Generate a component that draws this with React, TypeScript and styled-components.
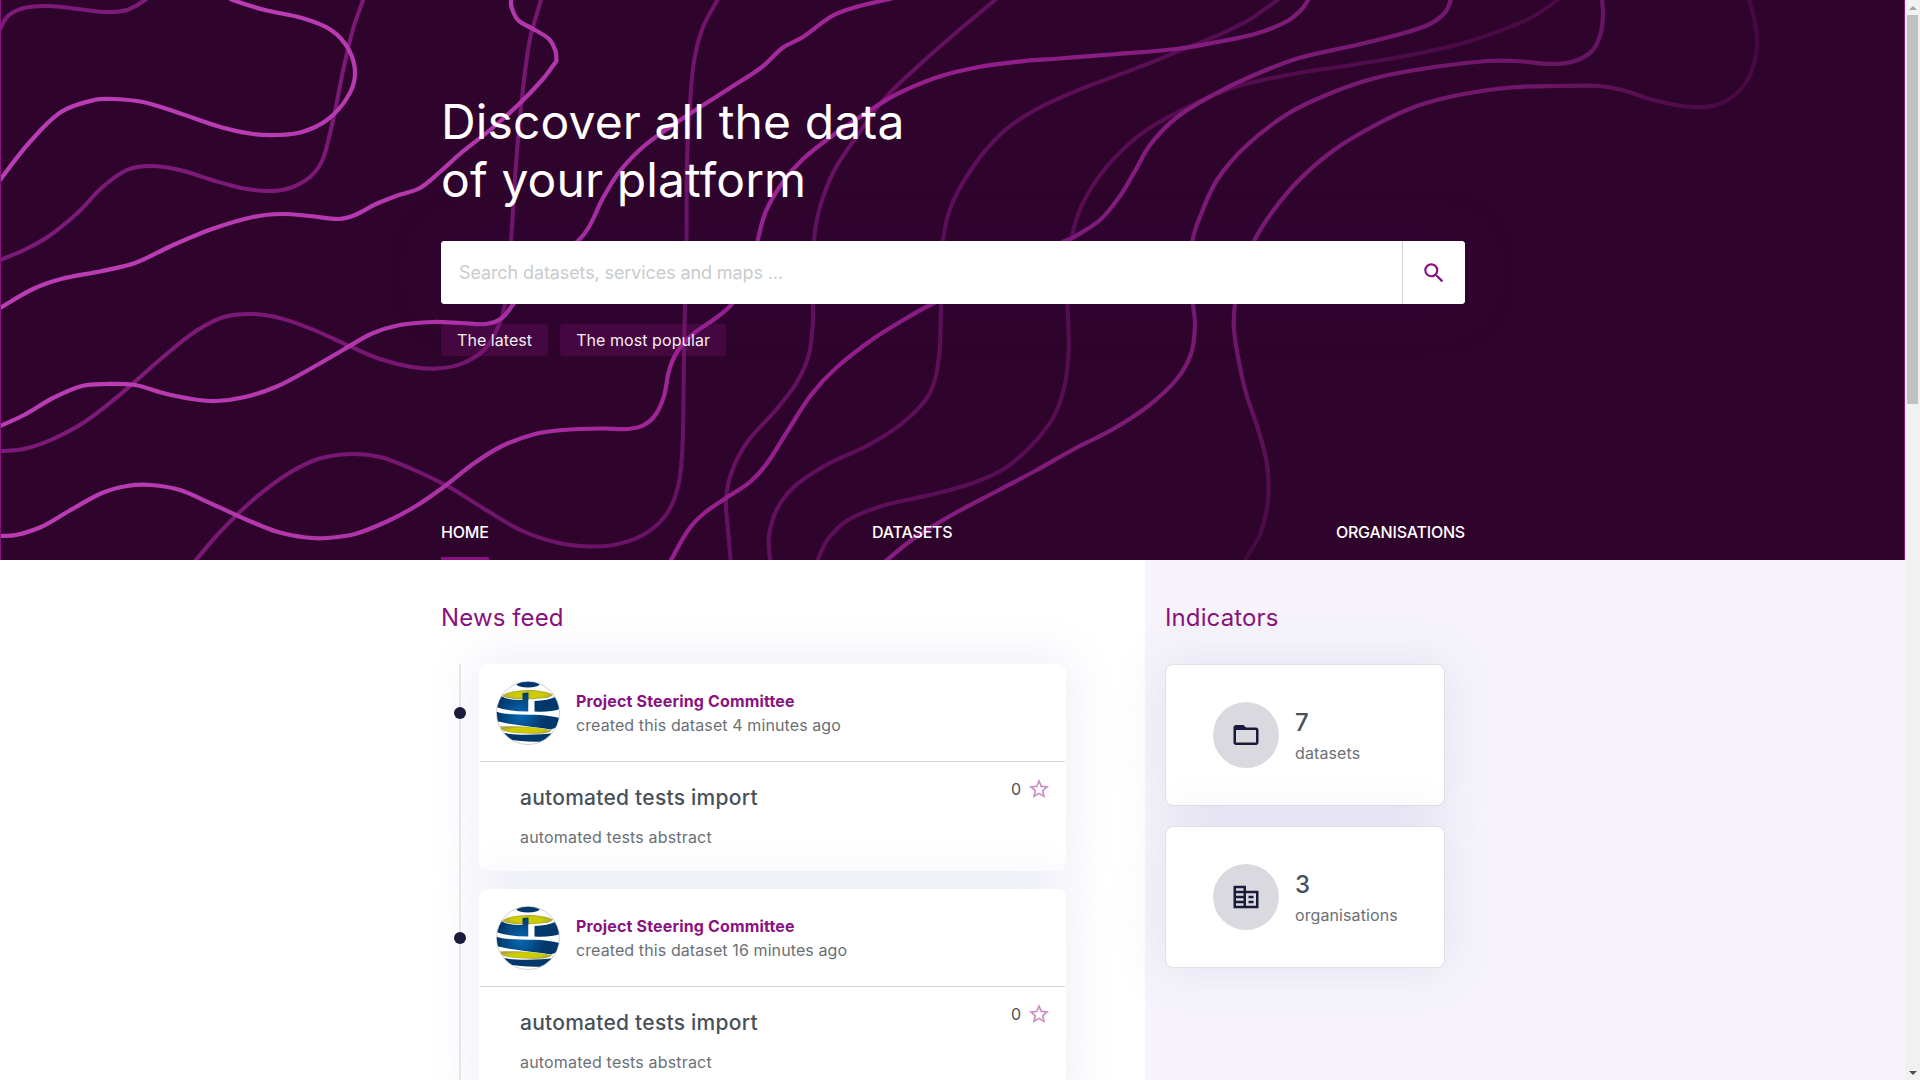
import React from "react";
import styled, { createGlobalStyle } from "styled-components";

const GlobalStyle = createGlobalStyle`
  *, *::before, *::after { box-sizing: border-box; }
  html, body { margin: 0; height: 100%; overflow: hidden; }
  body {
    font-family: Inter, "Liberation Sans", sans-serif;
    font-size: 16px;
    color: #47515b;
    background: #fff;
  }
  h1, h2, h3, p { margin: 0; font-weight: inherit; }
`;

type Point = [number, number];

const brightLines: Point[][] = [
  [[-6, 189], [0, 180], [29, 143], [61, 112], [94, 100], [114, 99], [143, 102], [176, 112], [224, 128], [253, 134], [278, 135], [302, 132], [327, 120], [347, 98], [355, 75], [349, 50], [331, 30], [302, 18], [265, 10], [233, 0], [222, -6]],
  [[-6, 312], [0, 308], [33, 289], [61, 279], [102, 271], [135, 263], [171, 246], [212, 229], [253, 217], [282, 214], [310, 216], [339, 219], [355, 215], [376, 204], [396, 196], [420, 188], [441, 171], [461, 153], [490, 130], [518, 105], [543, 79], [556.5, 61], [556.5, 61], [555.5, 51], [549, 39], [535, 30], [518, 20], [511.5, 7], [511, 0], [511, -6]],
  [[-6, 428], [0, 426], [24, 415], [53, 398], [82, 386], [106, 384], [135, 385], [163, 393], [192, 399], [216, 401], [245, 397], [278, 386], [310, 369], [343, 350], [371, 334], [400, 325], [433, 322], [461, 323], [486, 324], [502, 318], [513.5, 304], [545, 270], [578, 241], [589, 227], [603, 198], [620, 171], [644, 146], [673, 125], [697, 109], [730, 88], [762, 67], [783, 47.5], [803, 37], [832, 16], [856, 7], [885, 0], [905, -5]],
  [[-6, 536], [0, 536], [16, 535], [41, 527], [69, 511], [102, 493], [127, 486], [151, 485], [180, 490], [212, 504], [245, 519], [278, 532], [306, 537.5], [327, 538], [355, 534], [388, 521], [416, 506], [445, 486], [473, 464], [502, 446], [535, 434], [563, 430], [604, 428.5], [628, 429], [644, 425], [656, 414], [664, 396], [669, 371], [677, 352], [693, 334], [713, 320], [732, 304], [750, 272], [757.5, 241], [766, 211], [783, 182], [803, 159], [832, 136], [869, 111], [897, 94], [938, 77], [979, 67], [1024, 61], [1059, 58.5], [1117, 54], [1176, 49], [1223, 41], [1258, 33], [1287.5, 21], [1302, 9], [1308, 0], [1310, -6]],
  [[669, 564], [671, 560], [689, 529], [705, 512.5], [726, 498], [750, 482], [766.5, 464], [787, 432], [811, 395], [836, 368], [873, 339], [905, 319], [932, 304], [1000, 272], [1065, 241], [1073, 237.5], [1100, 220], [1120, 196], [1135, 171], [1150, 145], [1176, 118], [1211, 96], [1252, 76], [1299, 58], [1352, 46], [1393, 36], [1428, 25], [1445, 12.5], [1450.6, 0], [1451, -6]],
  [[883, 564], [887, 560], [913, 539], [950, 516], [999, 490], [1035, 471], [1076, 448], [1111.5, 430], [1147, 407], [1176, 380], [1191, 354], [1195, 325], [1193, 304], [1191, 272], [1192.5, 241], [1199.5, 218], [1217, 180], [1246, 146], [1287.5, 114], [1328.6, 94], [1375.5, 78], [1434, 67], [1487, 61], [1516, 61], [1551.6, 64], [1575, 61], [1593, 50], [1601, 32], [1603, 14], [1602, 0], [1601, -6]],
  [[1243, 564], [1245, 560], [1261, 532], [1268, 500], [1267, 464], [1258, 429], [1246, 393], [1238, 357], [1234, 329], [1235, 304], [1242, 272], [1254, 241], [1273, 211], [1299, 180], [1334, 150], [1375.5, 125], [1417, 106], [1463.5, 94], [1510.5, 87.5], [1557, 86], [1598.5, 86], [1622, 90], [1657, 101], [1692, 107], [1716, 105], [1736, 94], [1750, 75], [1757, 46], [1754.6, 21], [1749, 0], [1747, -6]],
];

const dimLines: Point[][] = [
  [[-2, 34], [0, 29], [8, 16], [24, 8], [49, 6], [78, 9], [106, 12], [127, 10], [145, 0], [152, -6]],
  [[-6, 262], [0, 260], [24, 250], [49, 236], [78, 212.5], [102, 187.5], [127, 170], [151, 166], [180, 170], [212, 180], [241, 188], [269, 191], [290, 188], [310, 177], [322, 161], [328.6, 139], [335, 111], [343, 71], [353, 29], [363, 0], [365, -6]],
  [[-6, 451], [0, 451], [24, 449], [53, 439], [86, 421], [122, 393], [163, 357], [196, 331], [224, 317], [253, 314], [282, 318.6], [314, 330], [347, 345], [380, 359], [412, 367], [437, 368.6], [461, 364], [484, 350], [498, 327], [505, 304], [508, 272], [511, 241], [516, 164], [522.5, 93], [530, 39], [541, 0], [543, -6]],
  [[193, 564], [196, 560], [220, 532], [253, 500], [286, 475], [318, 459], [351, 454], [380, 457], [412, 469], [449, 487], [486, 510], [522.5, 531], [559, 543], [592, 546.5], [620, 543.6], [648, 532], [668.6, 511], [679, 482], [682.5, 446], [684, 357], [685, 304], [686.5, 241], [687, 161], [690, 104], [694, 61], [703, 27], [717.5, 0], [721, -6]],
  [[731, 564], [730.6, 560], [728, 529], [726, 500], [732, 471], [748, 441], [775, 411], [797, 382], [809, 354], [813, 321], [813, 304], [814, 241], [820, 207], [834, 171], [856, 137.5], [885, 98], [922, 62.5], [958, 31], [995, 0], [1001, -6]],
  [[771, 564], [770, 560], [769, 536], [777, 509], [795, 486], [828, 464], [868.6, 445], [905, 421], [930, 393], [939, 357], [941, 304], [943, 241], [952, 204], [975, 164], [1003, 132], [1035, 110], [1076, 91], [1129, 71], [1182, 50], [1223, 33], [1252, 18], [1277.5, 0], [1284, -6]],
  [[816, 564], [817.5, 560], [828, 539], [848, 520], [885, 505], [930, 495], [970, 484], [1002, 470], [1029, 448], [1053, 418], [1064.5, 386], [1068.6, 350], [1067.5, 304], [1067.5, 272], [1071.6, 237.5], [1082, 205], [1105.6, 168], [1141, 134], [1188, 107], [1235, 87], [1293, 74], [1352, 65], [1411, 55], [1463.5, 43], [1504.6, 29], [1534, 16], [1563, -4]],
];

// Smooth curve through the points (Catmull-Rom converted to cubic Béziers).
// A point listed twice makes a sharp corner.
const smooth = (pts: Point[]): string => {
  let d = `M${pts[0][0]} ${pts[0][1]}`;
  for (let i = 0; i < pts.length - 1; i++) {
    const p0 = pts[Math.max(i - 1, 0)];
    const p1 = pts[i];
    const p2 = pts[i + 1];
    const p3 = pts[Math.min(i + 2, pts.length - 1)];
    const seg = Math.hypot(p2[0] - p1[0], p2[1] - p1[1]) / 3;
    const t1 = Math.hypot(p2[0] - p0[0], p2[1] - p0[1]) || 1;
    const t2 = Math.hypot(p3[0] - p1[0], p3[1] - p1[1]) || 1;
    const c1 = [p1[0] + ((p2[0] - p0[0]) / t1) * seg, p1[1] + ((p2[1] - p0[1]) / t1) * seg];
    const c2 = [p2[0] - ((p3[0] - p1[0]) / t2) * seg, p2[1] - ((p3[1] - p1[1]) / t2) * seg];
    d += `C${c1[0].toFixed(1)} ${c1[1].toFixed(1)} ${c2[0].toFixed(1)} ${c2[1].toFixed(1)} ${p2[0]} ${p2[1]}`;
  }
  return d;
};

const Viewport = styled.div`
  display: flex;
  height: 1080px;
  overflow: hidden;
`;

const Page = styled.div`
  flex: 1;
  min-width: 0;
  display: flex;
  flex-direction: column;
`;

const Hero = styled.header`
  position: relative;
  height: 560px;
  flex: none;
  background: #2f042c;
  overflow: hidden;
`;

const Waves = styled.svg`
  position: absolute;
  inset: 0;
  width: 1905px;
  height: 560px;
`;

const HeroContent = styled.div`
  position: relative;
  width: 1024px;
  height: 100%;
  margin: 0 auto 0 441px;
  padding-top: 93px;
  display: flex;
  flex-direction: column;
`;

const HeroTitle = styled.h1`
  font-size: 48px;
  line-height: 58px;
  font-weight: 400;
  letter-spacing: 0.12px;
  color: #fff;
`;

const SearchBar = styled.div`
  display: flex;
  height: 63px;
  border-radius: 4px;
  background: #fff;
  overflow: hidden;
`;

const SearchShadow = styled.div`
  margin-top: 32px;
  border-radius: 4px;
  box-shadow: 0 0 50px 5px rgba(48, 0, 90, 0.16);
`;

const SearchInput = styled.input`
  flex: 1;
  border: 0;
  outline: 0;
  padding: 0 18px;
  font: 400 18px Inter, sans-serif;
  letter-spacing: -0.11px;
  color: #47515b;
  &::placeholder { color: #c9cbce; opacity: 1; }
`;

const SearchButton = styled.button`
  width: 63px;
  padding: 0 1px 0 0;
  border: 0;
  border-left: 1px solid #d5d5d7;
  background: #fff;
  color: #88127f;
  display: flex;
  align-items: center;
  justify-content: center;
`;

const Tags = styled.div`
  display: flex;
  gap: 12px;
  margin-top: 20px;
`;

const Tag = styled.button`
  height: 32px;
  padding: 0 16px;
  border: 0;
  border-radius: 4px;
  background: rgba(136, 18, 127, 0.25);
  color: #f4eef4;
  font: 400 16px Inter, sans-serif;
  letter-spacing: 0.06px;
`;

const Nav = styled.nav`
  margin-top: auto;
  display: flex;
  justify-content: space-between;
`;

const NavItem = styled.a<{ $active?: boolean }>`
  height: 43px;
  padding-top: 5px;
  line-height: 20px;
  font-weight: 500;
  letter-spacing: -0.2px;
  color: #fff;
  border-bottom: 3px solid ${(p) => (p.$active ? "#88127f" : "transparent")};
`;

const Columns = styled.main`
  flex: 1;
  display: flex;
  min-height: 0;
`;

const FeedColumn = styled.section`
  width: 1145px;
  padding: 41px 79px 0 441px;
`;

const IndicatorColumn = styled.aside`
  flex: 1;
  padding: 41px 0 0 20px;
  background: #f6f4fa;
`;

const SectionTitle = styled.h2`
  font-size: 24px;
  line-height: 34px;
  letter-spacing: 0.12px;
  font-weight: 400;
  color: #88127f;
`;

const Timeline = styled.div`
  margin: 29px 0 0 18px;
  border-left: 2px solid #e9e9ee;
  display: flex;
  flex-direction: column;
  gap: 18px;
`;

const FeedRow = styled.div`
  display: flex;
  align-items: flex-start;
`;

const Dot = styled.span`
  width: 12px;
  height: 12px;
  margin: 43px 13px 0 -7px;
  border-radius: 50%;
  background: #1a1a3a;
  flex: none;
`;

const FeedCard = styled.article`
  width: 587px;
  height: 207px;
  border: 1px solid #fff;
  border-radius: 8px;
  background: #fff;
  box-shadow: 0 0 50px 5px rgba(86, 86, 178, 0.1);
`;

const CardHead = styled.div`
  display: flex;
  align-items: center;
  gap: 16px;
  height: 97px;
  padding: 0 16px;
  border-bottom: 1px solid #d5d5d9;
`;

const HeadText = styled.div`
  line-height: 24px;
`;

const Publisher = styled.p`
  font-weight: 700;
  letter-spacing: 0.16px;
  color: #88127f;
`;

const Muted = styled.p`
  color: #6b7076;
  letter-spacing: 0.1px;
`;

const Abstract = styled(Muted)`
  letter-spacing: 0.18px;
`;

const CardBody = styled.div`
  display: flex;
  justify-content: space-between;
  padding: 21px 14px 0 40px;
`;

const DatasetTitle = styled.h3`
  font-size: 21px;
  line-height: 30px;
  font-weight: 500;
  letter-spacing: 0.25px;
  margin-bottom: 14px;
`;

const Favorite = styled.div`
  display: flex;
  align-items: center;
  height: 24px;
  margin-top: -6px;
  gap: 6px;
  color: #c98cc5;
`;

const Count = styled.span`
  color: #47515b;
`;

const IndicatorList = styled.div`
  display: flex;
  flex-direction: column;
  gap: 20px;
  margin-top: 29px;
`;

const IndicatorCard = styled.div`
  width: 280px;
  height: 142px;
  padding-left: 47px;
  display: flex;
  align-items: center;
  gap: 16px;
  border: 1px solid #e0dfe7;
  border-radius: 8px;
  background: #fff;
  box-shadow: 0 0 50px 5px rgba(86, 86, 178, 0.1);
`;

const IconDisc = styled.span`
  width: 66px;
  height: 66px;
  border-radius: 50%;
  background: #dad9e0;
  color: #1a1a3a;
  display: flex;
  align-items: center;
  justify-content: center;
`;

const Figure = styled.p`
  padding-top: 2px;
  font-size: 24px;
  line-height: 32px;
  font-weight: 500;
`;

const FigureLabel = styled(Muted)`
  line-height: 24px;
  margin-top: 2px;
`;

const Scrollbar = styled.div`
  width: 15px;
  flex: none;
  display: flex;
  flex-direction: column;
  align-items: center;
  background: #f1f1f1;
`;

const Thumb = styled.div`
  width: 11px;
  height: 389px;
  background: #c1c1c1;
`;

const ScrollArrow = styled.div<{ $down?: boolean }>`
  width: 15px;
  height: 15px;
  display: flex;
  align-items: center;
  justify-content: center;
  margin-top: ${(p) => (p.$down ? "auto" : "0")};
  &::after {
    content: "";
    border: 4px solid transparent;
    ${(p) => (p.$down ? "border-top-color: #505050; border-bottom-width: 0;" : "border-bottom-color: #a3a3a3; border-top-width: 0;")}
  }
`;

const Icon = ({ d, size }: { d: string; size: number }) => (
  <svg width={size} height={size} viewBox="0 0 24 24" fill="currentColor">
    <path d={d} />
  </svg>
);

const ICONS = {
  search:
    "M15.5 14h-.79l-.28-.27A6.471 6.471 0 0 0 16 9.5 6.5 6.5 0 1 0 9.5 16c1.61 0 3.09-.59 4.23-1.57l.27.28v.79l5 4.99L20.49 19l-4.99-5zm-6 0C7.01 14 5 11.99 5 9.5S7.01 5 9.5 5 14 7.01 14 9.5 11.99 14 9.5 14z",
  star:
    "M22 9.24l-7.19-.62L12 2 9.19 8.63 2 9.24l5.46 4.73L5.82 21 12 17.27 18.18 21l-1.63-7.03L22 9.24zM12 15.4l-3.76 2.27 1-4.28-3.32-2.88 4.38-.38L12 6.1l1.71 4.04 4.38.38-3.32 2.88 1 4.28L12 15.4z",
  folder:
    "M20 6h-8l-2-2H4c-1.1 0-1.99.9-1.99 2L2 18c0 1.1.9 2 2 2h16c1.1 0 2-.9 2-2V8c0-1.1-.9-2-2-2zm0 12H4V8h16v10z",
  building:
    "M12 7V3H2v18h20V7H12zM10 19H4v-2h6V19zM10 15H4v-2h6V15zM10 11H4V9h6V11zM10 7H4V5h6V7zM20 19h-8V9h8V19zM18 11h-4v2h4V11zM18 15h-4v2h4V15z",
};

const HeroWaves = () => (
  <Waves viewBox="0 0 1905 560" fill="none">
    <defs>
      <linearGradient id="bright" gradientUnits="userSpaceOnUse" x1="250" y1="100" x2="1500" y2="700">
        <stop offset="0" stopColor="#b93cb4" />
        <stop offset="0.22" stopColor="#b034a9" />
        <stop offset="0.42" stopColor="#981f90" />
        <stop offset="0.68" stopColor="#7b1a75" />
        <stop offset="0.84" stopColor="#6a1566" />
        <stop offset="1" stopColor="#4a0a47" />
      </linearGradient>
      <linearGradient id="tail" gradientUnits="userSpaceOnUse" x1="1240" y1="0" x2="1760" y2="0">
        <stop offset="0" stopColor="#7f1a79" />
        <stop offset="0.55" stopColor="#701669" />
        <stop offset="0.8" stopColor="#520d4e" />
        <stop offset="1" stopColor="#450840" />
      </linearGradient>
      <linearGradient id="tailFade" gradientUnits="userSpaceOnUse" x1="0" y1="280" x2="0" y2="560">
        <stop offset="0" stopColor="#2f042c" stopOpacity="0" />
        <stop offset="1" stopColor="#2f042c" stopOpacity="0.75" />
      </linearGradient>
      <linearGradient id="dim" gradientUnits="userSpaceOnUse" x1="300" y1="100" x2="1300" y2="500">
        <stop offset="0" stopColor="#7d1979" />
        <stop offset="0.35" stopColor="#70146b" />
        <stop offset="0.6" stopColor="#5f0f5a" />
        <stop offset="1" stopColor="#4a0a46" />
      </linearGradient>
    </defs>
    <g stroke="url(#dim)" strokeWidth="4">
      {dimLines.map((line, i) => (
        <path key={i} d={smooth(line)} />
      ))}
    </g>
    <g strokeWidth="4.2" strokeLinejoin="round">
      {brightLines.map((line, i) => (
        <path key={i} d={smooth(line)} stroke={i === 6 ? "url(#tail)" : "url(#bright)"} />
      ))}
    </g>
    <rect x="1222" y="304" width="60" height="256" fill="url(#tailFade)" />
    <path d="M.5 0V560M1904.5 0V560" stroke="#88127f" />
  </Waves>
);

const Globe = ({ id }: { id: string }) => (
  <svg width="64" height="64" viewBox="0 0 64 64">
    <defs>
      <clipPath id={`${id}-clip`}>
        <circle cx="32" cy="32" r="31.2" />
      </clipPath>
      <radialGradient id={`${id}-blue`} gradientUnits="userSpaceOnUse" cx="25" cy="34" r="24">
        <stop offset="0" stopColor="#0868b4" />
        <stop offset="1" stopColor="#01386b" />
      </radialGradient>
      <radialGradient id={`${id}-gold`}>
        <stop offset="0.6" stopColor="#cccc00" />
        <stop offset="1" stopColor="#aea240" />
      </radialGradient>
    </defs>
    <circle cx="32" cy="32" r="31.5" fill="#fff" stroke="#cfcfd4" />
    <g clipPath={`url(#${id}-clip)`}>
      <ellipse cx="32" cy="3.3" rx="11.5" ry="3.2" fill="#01386b" />
      <path d="M8 13.500C18 7.500 46 7.500 57 13.500C56 16 48 18.500 39 18.500H26C17 18.500 10 17 6 15Z" fill={`url(#${id}-gold)`} />
      <path d="M5 15Q13 19.500 26.500 19V12L32.500 11.500V30.500Q13 30.500 0 26V20Z" fill={`url(#${id}-blue)`} />
      <path d="M32.500 18.500L57 16.500L58 18L38.500 19.500V31H32.500Z" fill="#fff" />
      <path d="M38.500 20Q52 19.500 59 16L64 25V28Q54 31.500 38.500 30.500Z" fill="#01386b" />
      <path d="M0 30.500C13 36 43 31 64 37V45L55 48.500C39 46 20 45 0 40Z" fill={`url(#${id}-blue)`} />
      <path d="M4 45.500C20 45 40 45.500 56 49.500C51 53 43 53 30 52.500C16 52 9 51 5 48.500Z" fill={`url(#${id}-gold)`} />
      <path d="M4 51C18 55 42 54 59 52L50 60.500Q26 61.500 11 58Z" fill="#01386b" />
    </g>
  </svg>
);

const FEED = [
  { id: "a", when: "4 minutes ago" },
  { id: "b", when: "16 minutes ago" },
];

const INDICATORS = [
  { value: 7, label: "datasets", icon: ICONS.folder },
  { value: 3, label: "organisations", icon: ICONS.building },
];

export default function App() {
  return (
    <Viewport>
      <GlobalStyle />
      <Page>
        <Hero>
          <HeroWaves />
          <HeroContent>
            <HeroTitle>
              Discover all the data
              <br />
              of your platform
            </HeroTitle>
            <SearchShadow>
              <SearchBar>
                <SearchInput placeholder="Search datasets, services and maps ..." />
                <SearchButton>
                  <Icon d={ICONS.search} size={26} />
                </SearchButton>
              </SearchBar>
            </SearchShadow>
            <Tags>
              <Tag>The latest</Tag>
              <Tag>The most popular</Tag>
            </Tags>
            <Nav>
              <NavItem $active>HOME</NavItem>
              <NavItem>DATASETS</NavItem>
              <NavItem>ORGANISATIONS</NavItem>
            </Nav>
          </HeroContent>
        </Hero>
        <Columns>
          <FeedColumn>
            <SectionTitle>News feed</SectionTitle>
            <Timeline>
              {FEED.map((item) => (
                <FeedRow key={item.id}>
                  <Dot />
                  <FeedCard>
                    <CardHead>
                      <Globe id={item.id} />
                      <HeadText>
                        <Publisher>Project Steering Committee</Publisher>
                        <Muted>created this dataset {item.when}</Muted>
                      </HeadText>
                    </CardHead>
                    <CardBody>
                      <div>
                        <DatasetTitle>automated tests import</DatasetTitle>
                        <Abstract>automated tests abstract</Abstract>
                      </div>
                      <Favorite>
                        <Count>0</Count>
                        <Icon d={ICONS.star} size={24} />
                      </Favorite>
                    </CardBody>
                  </FeedCard>
                </FeedRow>
              ))}
            </Timeline>
          </FeedColumn>
          <IndicatorColumn>
            <SectionTitle>Indicators</SectionTitle>
            <IndicatorList>
              {INDICATORS.map((item) => (
                <IndicatorCard key={item.label}>
                  <IconDisc>
                    <Icon d={item.icon} size={30} />
                  </IconDisc>
                  <div>
                    <Figure>{item.value}</Figure>
                    <FigureLabel>{item.label}</FigureLabel>
                  </div>
                </IndicatorCard>
              ))}
            </IndicatorList>
          </IndicatorColumn>
        </Columns>
      </Page>
      <Scrollbar>
        <ScrollArrow />
        <Thumb />
        <ScrollArrow $down />
      </Scrollbar>
    </Viewport>
  );
}
